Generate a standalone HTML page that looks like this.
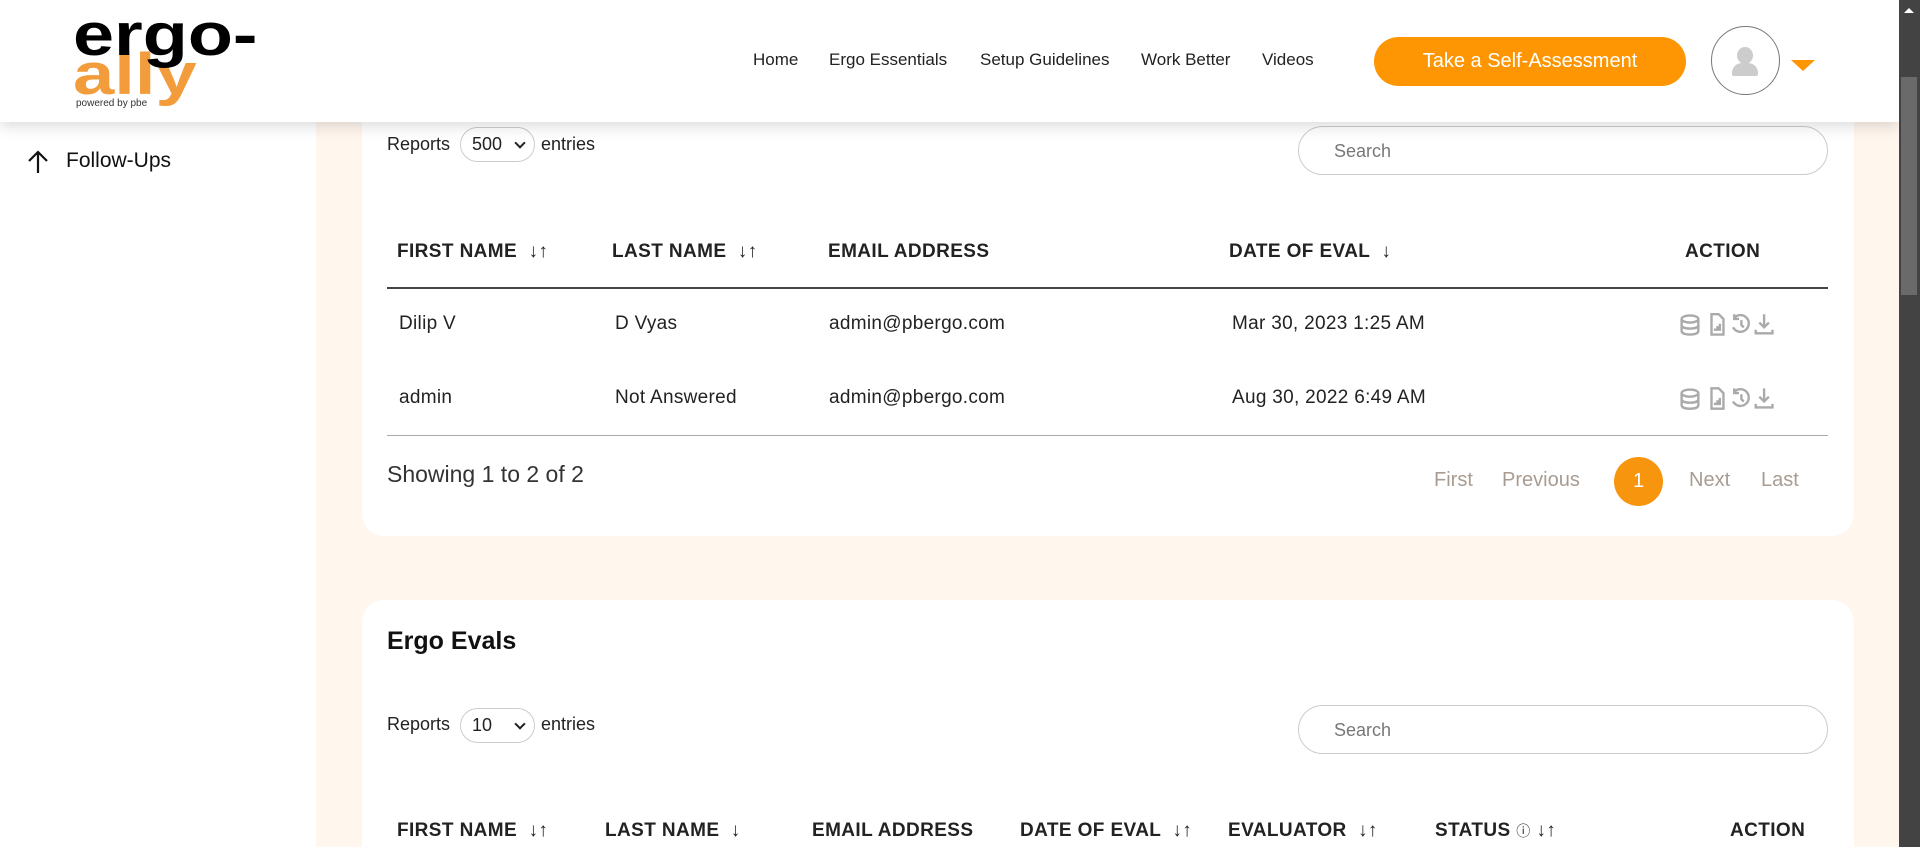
<!DOCTYPE html>
<html style="height:847px;overflow:hidden"><head><meta charset="utf-8"><style>
*{box-sizing:border-box;margin:0;padding:0}
html,body{width:1920px;height:847px;overflow:hidden}
body{font-family:"Liberation Sans",sans-serif;color:#222;background:#fff6ee;position:relative}
.abs{position:absolute}
header{position:absolute;left:0;top:0;width:1899px;height:122px;background:#fff;box-shadow:0 4px 14px rgba(0,0,0,.15);z-index:5}
.nav{position:absolute;top:50px;font-size:17px;color:#222}
.side{position:absolute;left:0;top:0;width:316px;height:847px;background:#fff}
.card{position:absolute;left:362px;width:1492px;background:#fff;border-radius:22px;overflow:hidden}
.th{position:absolute;font-weight:bold;font-size:19px;letter-spacing:.4px;color:#222}
.td{position:absolute;font-size:19px;letter-spacing:.3px;color:#222}
.sel{position:absolute;width:75px;height:35px;border:1px solid #ccc;border-radius:18px;font-size:18px;padding:6px 0 0 11px}
.sel:after{content:"";position:absolute;right:10px;top:11px;width:6px;height:6px;border-right:2px solid #222;border-bottom:2px solid #222;transform:rotate(45deg)}
.search{position:absolute;left:936px;width:530px;height:49px;border:1px solid #ccc;border-radius:25px;font-size:18px;color:#777;padding:14px 0 0 35px}
.pg{position:absolute;top:469px;font-size:20px;color:#a89c92}
</style></head><body>
<div class="side"></div>
<div class="abs" style="left:27px;top:150px"><svg width="22" height="24" viewBox="0 0 22 24"><path d="M11 23V3M2 11l9-9 9 9" stroke="#111" stroke-width="2.2" fill="none"/></svg></div>
<div class="abs" style="left:66px;top:149px;font-size:21px;color:#111">Follow-Ups</div>

<div class="card" style="top:60px;height:476px">
 <div class="abs" style="left:25px;top:74px;font-size:18px">Reports</div>
 <div class="sel" style="left:98px;top:67px">500</div>
 <div class="abs" style="left:179px;top:74px;font-size:18px">entries</div>
 <div class="search" style="top:66px">Search</div>
 <div class="th" style="left:35px;top:181px">FIRST NAME &nbsp;↓↑</div>
 <div class="th" style="left:250px;top:181px">LAST NAME &nbsp;↓↑</div>
 <div class="th" style="left:466px;top:181px">EMAIL ADDRESS</div>
 <div class="th" style="left:867px;top:181px">DATE OF EVAL &nbsp;↓</div>
 <div class="th" style="left:1323px;top:181px">ACTION</div>
 <div class="abs" style="left:25px;top:227px;width:1441px;height:2px;background:#444"></div>
 <div class="td" style="left:37px;top:253px">Dilip V</div>
 <div class="td" style="left:253px;top:253px">D Vyas</div>
 <div class="td" style="left:467px;top:253px">admin@pbergo.com</div>
 <div class="td" style="left:870px;top:253px">Mar 30, 2023 1:25 AM</div>
 <div class="td" style="left:37px;top:327px">admin</div>
 <div class="td" style="left:253px;top:327px">Not Answered</div>
 <div class="td" style="left:467px;top:327px">admin@pbergo.com</div>
 <div class="td" style="left:870px;top:327px">Aug 30, 2022 6:49 AM</div>
 <div class="abs" style="left:1317px;top:253px"><svg width="120" height="110" viewBox="0 0 100 92" fill="none" stroke="#aaa" stroke-width="2">
  <g id="ic"><ellipse cx="9" cy="5" rx="7" ry="3"/><path d="M2 5v10c0 2 3 3 7 3s7-1 7-3V5M2 10c0 2 3 3 7 3s7-1 7-3"/><path d="M27 1h6l4 4v13h-10z"/><path d="M30 15v-2M32 15v-4M34 15v-6"/><path d="M46 4a7 7 0 1 1-1 8M46 1v4h4M52 6v4l2 2"/><path d="M71 1v11M67 8l4 4 4-4M64 14v3h14v-3"/></g>
  <use href="#ic" y="62"/></svg></div>
 <div class="abs" style="left:25px;top:375px;width:1441px;height:1px;background:#aaa"></div>
 <div class="abs" style="left:25px;top:401px;font-size:23px;color:#333">Showing 1 to 2 of 2</div>
</div>
<div class="pg" style="left:1434px">First</div>
<div class="pg" style="left:1502px">Previous</div>
<div class="abs" style="left:1614px;top:457px;width:49px;height:49px;border-radius:50%;background:#f7950e;color:#fff;font-size:20px;text-align:center;line-height:49px">1</div>
<div class="pg" style="left:1689px">Next</div>
<div class="pg" style="left:1761px">Last</div>

<div class="card" style="top:600px;height:247px;border-radius:22px 22px 0 0">
 <div class="abs" style="left:25px;top:27px;font-size:25px;font-weight:bold;color:#111">Ergo Evals</div>
 <div class="abs" style="left:25px;top:114px;font-size:18px">Reports</div>
 <div class="sel" style="left:98px;top:108px">10</div>
 <div class="abs" style="left:179px;top:114px;font-size:18px">entries</div>
 <div class="search" style="top:105px">Search</div>
 <div class="th" style="left:35px;top:220px">FIRST NAME &nbsp;↓↑</div>
 <div class="th" style="left:243px;top:220px">LAST NAME &nbsp;↓</div>
 <div class="th" style="left:450px;top:220px">EMAIL ADDRESS</div>
 <div class="th" style="left:658px;top:220px">DATE OF EVAL &nbsp;↓↑</div>
 <div class="th" style="left:866px;top:220px">EVALUATOR &nbsp;↓↑</div>
 <div class="th" style="left:1073px;top:220px">STATUS <span style="font-size:14px;font-weight:normal">ⓘ</span> ↓↑</div>
 <div class="th" style="left:1368px;top:220px">ACTION</div>
</div>

<header>
 <div class="abs" style="left:73px;top:46px;font-size:58px;font-weight:900;color:#f39c3b;line-height:58px;transform:scaleX(1.28);transform-origin:0 0">ally</div>
 <div class="abs" style="left:73px;top:5px;font-size:60px;font-weight:900;color:#000;line-height:60px;transform:scaleX(1.23);transform-origin:0 0">ergo-</div>
 <div class="abs" style="left:76px;top:98px;font-size:10px;color:#333">powered by pbe</div>
 <div class="nav" style="left:753px">Home</div>
 <div class="nav" style="left:829px">Ergo Essentials</div>
 <div class="nav" style="left:980px">Setup Guidelines</div>
 <div class="nav" style="left:1141px">Work Better</div>
 <div class="nav" style="left:1262px">Videos</div>
 <div class="abs" style="left:1374px;top:37px;width:312px;height:49px;border-radius:25px;background:#fd9602;color:#fff;font-size:20px;text-align:center;line-height:49px">Take a Self-Assessment</div>
 <div class="abs" style="left:1711px;top:26px;width:69px;height:69px;border-radius:50%;border:1px solid #777;overflow:hidden">
  <div class="abs" style="left:25px;top:20px;width:16px;height:17px;border-radius:50%;background:#ccc"></div>
  <div class="abs" style="left:20px;top:36px;width:26px;height:13px;border-radius:10px 10px 2px 2px;background:#ccc"></div>
 </div>
 <div class="abs" style="left:1791px;top:60px;width:0;height:0;border-left:12px solid transparent;border-right:12px solid transparent;border-top:11px solid #fd9602"></div>
</header>
<div class="abs" style="left:1899px;top:0;width:21px;height:847px;background:#434343;z-index:6">
 <div class="abs" style="left:2px;top:77px;width:16px;height:218px;background:#6a6a6a"></div>
 <div class="abs" style="left:5px;top:8px;border-left:5px solid transparent;border-right:5px solid transparent;border-bottom:5px solid #fff"></div>
</div>
</body></html>
